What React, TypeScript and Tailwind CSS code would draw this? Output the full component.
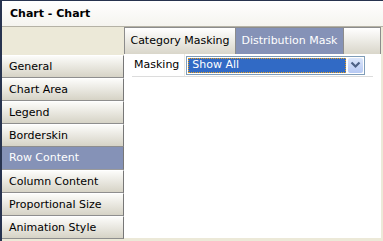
import React from 'react';

const menu = [
  'General',
  'Chart Area',
  'Legend',
  'Borderskin',
  'Row Content',
  'Column Content',
  'Proportional Size',
  'Animation Style',
];

const ChevronDown = () => (
  <svg width="11" height="8" viewBox="0 0 11 8">
    <path d="M1.5 1.5 L5.5 5.5 L9.5 1.5" fill="none" stroke="#4d6185" strokeWidth="2.2" />
  </svg>
);

const App = () => {
  return (
    <div
      className="w-[383px] h-[241px] overflow-hidden bg-[#ece9d8] border-l-2 border-t border-[#27334f] flex flex-col text-[11px] text-black"
      style={{ fontFamily: '"DejaVu Sans", Verdana, sans-serif' }}
    >
      {/* title */}
      <div className="h-[26px] shrink-0 flex items-center pl-[8px] pt-[2px] font-bold bg-gradient-to-b from-white to-[#f5f4ef] border-b border-[#b5b2a5]">
        Chart - Chart
      </div>

      <div className="flex flex-1 min-h-0">
        {/* left menu */}
        <div className="w-[122px] shrink-0 flex flex-col pt-[28px]">
          {menu.map((item) => {
            const active = item === 'Row Content';
            return (
              <div
                key={item}
                className={
                  active
                    ? 'h-[23px] shrink-0 flex items-center pl-[7px] pt-[1px] bg-[#8592b7] text-white border-r border-[#777] border-b border-b-[#9a9a9a]'
                    : 'h-[23px] shrink-0 flex items-center pl-[7px] pt-[1px] bg-gradient-to-b from-[#fcfcfa] to-[#d6d3c6] border-r border-[#777] border-b border-b-[#8e8e8e] border-t border-t-white'
                }
              >
                {item}
              </div>
            );
          })}
        </div>

        {/* right side */}
        <div className="flex-1 flex flex-col pr-[2px] pb-[3px]">
          <div className="h-[27px] shrink-0 flex">
            <div className="w-[111px] flex items-center justify-center pt-[1px] bg-gradient-to-b from-white to-[#d9d6ca] border-l border-t border-[#8c8c8c]">
              Category Masking
            </div>
            <div className="w-[108px] flex items-center justify-center pt-[1px] bg-[#8592b7] text-white border-l border-t border-[#8c8c8c]">
              Distribution Mask
            </div>
            <div className="flex-1 bg-gradient-to-b from-white to-[#d9d6ca] border-l border-t border-r border-[#8c8c8c]" />
          </div>

          <div className="flex-1 bg-white">
            <div className="flex items-center h-[23px] mx-[8px] border-b border-[#dcdcdc]">
              <div className="pl-[2px] pr-[5px] h-full flex items-center border-r border-[#eceae3]">
                Masking
              </div>
              <div className="ml-[1px] w-[179px] h-[19px] border border-[#7f9db9] flex items-center p-[1px]">
                <div className="flex-1 h-full bg-[#316ac5] text-white flex items-center pl-[4px] outline outline-1 outline-dotted outline-[#e8a020] -outline-offset-1">
                  Show All
                </div>
                <div className="w-[15px] h-full ml-[2px] rounded-[2px] bg-gradient-to-b from-[#dbe6fb] to-[#b7c9f3] flex items-center justify-center">
                  <ChevronDown />
                </div>
              </div>
            </div>
          </div>
        </div>
      </div>
    </div>
  );
};

export default App;
